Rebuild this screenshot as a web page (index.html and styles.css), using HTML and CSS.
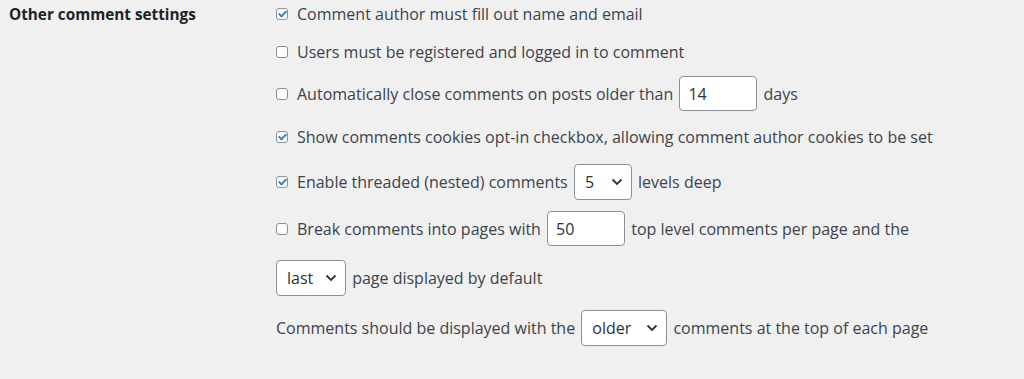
FILE: index.html
```html
<!DOCTYPE html>
<html>
<head>
<meta charset="utf-8">
<link rel="stylesheet" href="styles.css">
</head>
<body>
<div class="settings">
  <div class="label">Other comment settings</div>
  <div class="fields">
    <label class="row r1"><span class="cb checked"></span>Comment author must fill out name and email</label>
    <label class="row r2"><span class="cb"></span>Users must be registered and logged in to comment</label>
    <label class="row r3"><span class="cb"></span>Automatically close comments on posts older than <span class="input w14">14</span> days</label>
    <label class="row r4"><span class="cb checked"></span>Show comments cookies opt-in checkbox, allowing comment author cookies to be set</label>
    <label class="row r5"><span class="cb checked"></span>Enable threaded (nested) comments <span class="select w5">5<svg class="chev" viewBox="0 0 12 8"><path d="M1.5 1.5 6 6l4.5-4.5"/></svg></span> levels deep</label>
    <label class="row r6"><span class="cb"></span>Break comments into pages with <span class="input w50">50</span> top level comments per page and the</label>
    <div class="row r7"><span class="select wlast">last<svg class="chev" viewBox="0 0 12 8"><path d="M1.5 1.5 6 6l4.5-4.5"/></svg></span> page displayed by default</div>
    <div class="row r8">Comments should be displayed with the <span class="select wolder">older<svg class="chev" viewBox="0 0 12 8"><path d="M1.5 1.5 6 6l4.5-4.5"/></svg></span> comments at the top of each page</div>
  </div>
</div>
</body>
</html>
```
FILE: styles.css
```css
html, body {
  margin: 0;
  background: #f0f0f1;
}
body {
  font-family: "Open Sans", "Noto Sans", sans-serif;
  font-size: 16px;
  line-height: 20px;
  color: #3c434a;
}
.settings {
  display: flex;
  padding: 0 0 0 9px;
}
.label {
  width: 267px;
  font-size: 15.3px;
  font-weight: 700;
  color: #1d2327;
  padding-top: 4px;
}
.fields {
  display: flex;
  flex-direction: column;
}
.row {
  display: flex;
  align-items: baseline;
  white-space: pre;
}
.r1 { margin-top: 4px; height: 20px; }
.r2 { margin-top: 18px; height: 20px; }
.r3 { margin-top: 14px; }
.r4 { margin-top: 16px; height: 20px; }
.r5 { margin-top: 17px; }
.r6 { margin-top: 11px; }
.r7 { margin-top: 14px; }
.r8 { margin-top: 14px; }
.cb {
  flex: none;
  width: 12px;
  height: 12px;
  box-sizing: border-box;
  border: 1px solid #8c8f94;
  border-radius: 3px;
  background: #fff;
  margin-right: 9px;
  align-self: center;
  position: relative;
}
.cb.checked::after {
  content: "";
  position: absolute;
  left: 3px;
  top: 0px;
  width: 3px;
  height: 6px;
  border: solid #3582c4;
  border-width: 0 2px 2px 0;
  transform: rotate(45deg);
}
.input, .select {
  box-sizing: border-box;
  display: inline-flex;
  align-items: center;
  height: 35px;
  border: 1px solid #8c8f94;
  border-radius: 4px;
  background: #fff;
  color: #2c3338;
  padding: 0 8px;
  margin: 0 2px;
}
.select { height: 36px; justify-content: space-between; padding: 0 8px 0 10px; }
.w14 { width: 78px; }
.w50 { width: 78px; }
.w5 { width: 58px; }
.wlast { width: 70px; margin-left: 0; }
.wolder { width: 86px; }
.chev {
  width: 12px;
  height: 8px;
  fill: none;
  stroke: #2c3338;
  stroke-width: 1.8;
}
```
